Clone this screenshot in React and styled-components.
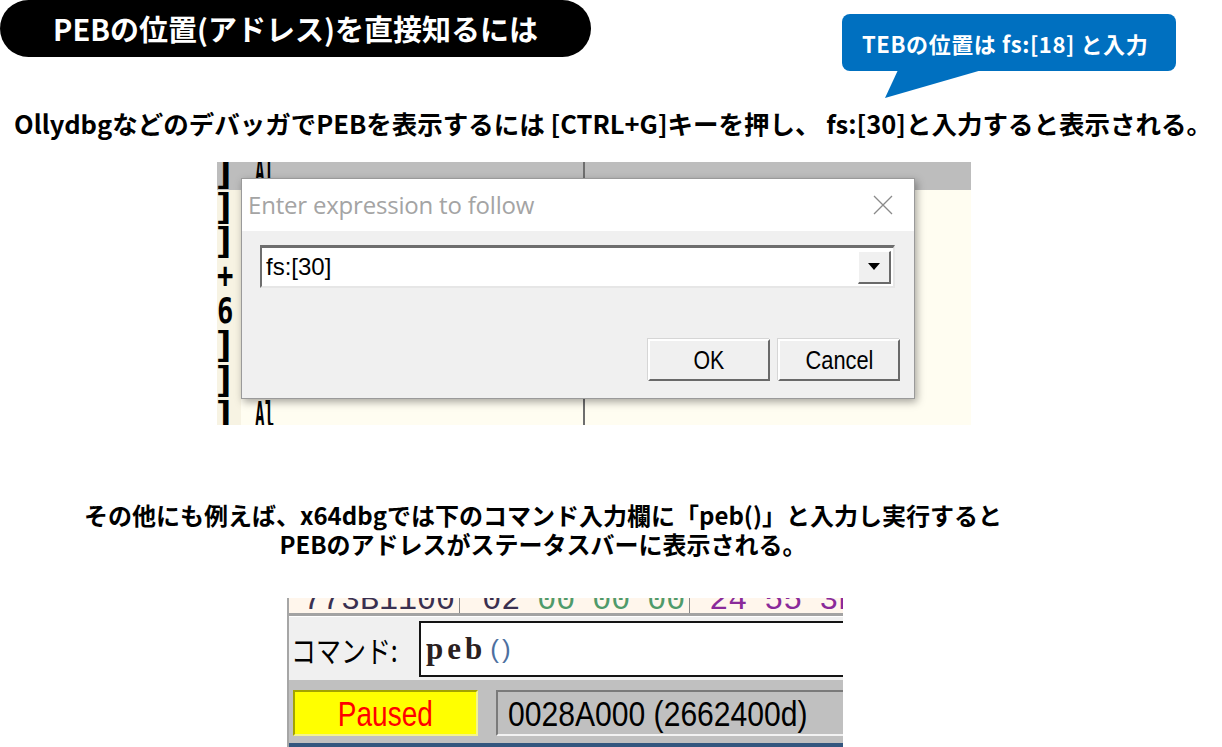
import React from "react";
import styled, { createGlobalStyle } from "styled-components";

const Global = createGlobalStyle`
  html, body { margin: 0; padding: 0; background: #fff; }
  body {
    width: 1222px; height: 747px; overflow: hidden;
    font-family: "Noto Sans CJK JP", "Noto Sans", sans-serif;
  }
`;

const JP = `"Noto Sans CJK JP", "Noto Sans", sans-serif`;
const ARIAL = `"Liberation Sans", Arial, sans-serif`;

const Page = styled.div`
  width: 1222px;
  height: 747px;
  display: flex;
  flex-direction: column;
  background: #fff;
  overflow: hidden;
`;

const Header = styled.header`
  display: flex;
  justify-content: space-between;
  align-items: flex-start;
  height: 100px;
  flex-shrink: 0;
`;

const TitlePill = styled.h1`
  margin: 0;
  width: 591px;
  height: 57px;
  border-radius: 29px;
  background: #000;
  color: #fff;
  display: flex;
  align-items: center;
  justify-content: center;
  font: 700 29px/1 ${JP};
`;

const Bubble = styled.div`
  position: relative;
  margin: 14px 46px 0 0;
  width: 334px;
  height: 57px;
  box-sizing: border-box;
  padding-left: 20px;
  background: #0070c0;
  border-radius: 8px;
  color: #fff;
  display: flex;
  align-items: center;
  font: 700 22px/1 ${JP};
  letter-spacing: 0.6px;
  &::after {
    content: "";
    position: absolute;
    left: 43px;
    top: 56px;
    width: 97px;
    height: 28px;
    background: #0070c0;
    clip-path: polygon(13px 0, 0 100%, 100% 0);
  }
`;

const Lead = styled.p`
  margin: 8px 0 0 14px;
  font: 700 25.5px/30px ${JP};
  color: #000;
  white-space: nowrap;
`;

/* scaled text: bitmap-like condensed fonts of the screenshots */
const Squeezed = styled.span`
  display: inline-block;
  white-space: nowrap;
  transform: scale(${(p) => p.$sx || 1}, ${(p) => p.$sy || 1});
  transform-origin: ${(p) => p.$origin || "center"} center;
`;

/* ---------- OllyDbg screenshot ---------- */

const OllyShot = styled.div`
  position: relative;
  margin: 24px 0 0 217px;
  width: 754px;
  height: 263px;
  overflow: hidden;
  background: #fffdf1;
  flex-shrink: 0;
`;

const OllyRows = styled.div`
  display: flex;
  flex-direction: column;
  margin-top: -7px;
`;

const OllyRow = styled.div`
  display: flex;
  height: 34.7px;
  background: ${(p) => (p.$head ? "#bdbdbd" : "transparent")};
  font: 700 32px/34.7px "DejaVu Sans Mono", monospace;
  color: #000;
`;

const BracketCell = styled.div`
  width: 24px;
  background: ${(p) => (p.$head ? "#bdbdbd" : "#f7f3e3")};
  box-sizing: border-box;
  overflow: hidden;
`;

const BracketGlyph = styled(Squeezed)`
  margin-left: ${(p) => (p.$bracket ? -5 : 0)}px;
`;

const CodeCell = styled.div`
  width: 342px;
  padding-left: 14px;
  box-sizing: border-box;
`;

const SepCell = styled.div`
  width: 2px;
  background: #6e6e6e;
`;

const RestCell = styled.div`
  flex: 1;
`;

const Dialog = styled.div`
  position: absolute;
  left: 24px;
  top: 16px;
  width: 674px;
  height: 221px;
  box-sizing: border-box;
  border: 1px solid #9a9a9a;
  background: #f0f0f0;
  box-shadow: 2px 3px 8px rgba(0, 0, 0, 0.35);
  display: flex;
  flex-direction: column;
`;

const TitleBar = styled.div`
  height: 52px;
  flex-shrink: 0;
  background: #fff;
  display: flex;
  align-items: center;
  justify-content: space-between;
  padding: 0 21px 0 6px;
`;

const TitleText = styled.span`
  font: 400 24px/1 "Open Sans", "Noto Sans", sans-serif;
  letter-spacing: -0.2px;
  color: #a4a4a4;
`;

const DialogBody = styled.div`
  display: flex;
  flex-direction: column;
  padding: 14px 14px 0 18px;
`;

const Combo = styled.div`
  width: 635px;
  height: 43px;
  box-sizing: border-box;
  border-top: 3px solid #6e6e6e;
  border-left: 2px solid #6e6e6e;
  border-bottom: 2px solid #e6e6e6;
  border-right: 2px solid #e6e6e6;
  background: #fff;
  display: flex;
  align-items: center;
  padding: 0 2px 0 4px;
`;

const ComboText = styled.span`
  font: 400 24px/1 ${ARIAL};
  color: #000;
`;

const DropButton = styled.div`
  margin-left: auto;
  width: 33px;
  height: 33px;
  box-sizing: border-box;
  background: #f0f0f0;
  border-top: 1px solid #fff;
  border-left: 1px solid #fff;
  border-right: 2px solid #6a6a6a;
  border-bottom: 2px solid #6a6a6a;
  display: flex;
  align-items: center;
  justify-content: center;
`;

const ButtonRow = styled.div`
  display: flex;
  justify-content: flex-end;
  gap: 8px;
  margin-top: 51px;
`;

const WinButton = styled.div`
  width: 122px;
  height: 42px;
  box-sizing: border-box;
  background: #f0f0f0;
  border-top: 2px solid #fff;
  border-left: 2px solid #fff;
  border-right: 2px solid #696969;
  border-bottom: 2px solid #696969;
  box-shadow: -1px -1px 0 #d6d6d6;
  display: flex;
  align-items: center;
  justify-content: center;
  font: 400 26px/1 ${ARIAL};
  color: #000;
`;

/* ---------- paragraph ---------- */

const Para = styled.p`
  margin: 75px 0 0 0;
  width: 1086px;
  text-align: center;
  font: 700 24px/29px ${JP};
  color: #000;
`;

/* ---------- x64dbg screenshot ---------- */

const X64Shot = styled.div`
  margin: 40px 0 0 287px;
  width: 556px;
  height: 149px;
  box-sizing: border-box;
  border-left: 2px solid #a6a6a6;
  display: flex;
  flex-direction: column;
  overflow: hidden;
  flex-shrink: 0;
`;

const DumpRow = styled.div`
  height: 15px;
  flex-shrink: 0;
  background: #fff6ec;
  overflow: hidden;
  display: flex;
  align-items: flex-end;
  border-bottom: 3px solid #a3a3a3;
  font: 400 31.7px/1 "Liberation Mono", monospace;
`;

const DumpGroup = styled.div`
  display: flex;
  gap: 17px;
  height: 30px;
  align-items: flex-end;
  padding: 0 ${(p) => p.$pr || 0}px 0 ${(p) => p.$pl || 0}px;
  border-right: ${(p) => (p.$sep ? "1px solid #8a8a8a" : "none")};
  margin-bottom: -5px;
`;

const DumpText = styled.span`
  color: ${(p) => p.$c};
`;

const CommandRow = styled.div`
  height: 63px;
  flex-shrink: 0;
  background: #f0f0f0;
  border-top: 1px solid #fff;
  display: flex;
  align-items: center;
`;

const CommandLabel = styled.span`
  width: 130px;
  flex-shrink: 0;
  box-sizing: border-box;
  padding-left: 2px;
  font: 400 26px/1 ${JP};
  color: #000;
`;

const CommandInput = styled.div`
  flex: 1;
  height: 56px;
  box-sizing: border-box;
  margin-right: -10px;
  border: 2px solid #141414;
  background: #fff;
  display: flex;
  align-items: center;
  padding-left: 5px;
`;

const CmdWord = styled.span`
  font: 700 31px/1 "Liberation Serif", serif;
  letter-spacing: 4px;
  color: #2a2020;
`;

const CmdParen = styled.span`
  margin-left: 4px;
  font: 400 26px/1 ${ARIAL};
  color: #4d6fa0;
  letter-spacing: 3px;
`;

const StatusBar = styled.div`
  flex: 1;
  background: #c0c0c0;
  border-bottom: 4px solid #34577f;
  display: flex;
  align-items: flex-start;
  gap: 18px;
  padding: 10px 0 0 4px;
`;

const StatusPanel = styled.div`
  height: 46px;
  box-sizing: border-box;
  display: flex;
  align-items: center;
  overflow: hidden;
  font: 400 35px/1 ${ARIAL};
  ${(p) =>
    p.$state
      ? `
    width: 185px;
    flex-shrink: 0;
    justify-content: center;
    background: #ffff00;
    color: #ff0000;
    border-top: 2px solid #a3a300;
    border-left: 2px solid #a3a300;
    border-right: 2px solid #f4f48a;
    border-bottom: 2px solid #f4f48a;
  `
      : `
    flex: 1;
    margin-right: -10px;
    padding-left: 10px;
    background: #c0c0c0;
    color: #000;
    border-top: 2px solid #7a7a7a;
    border-left: 2px solid #7a7a7a;
    border-bottom: 2px solid #f2f2f2;
  `}
`;

const CloseIcon = () => (
  <svg width="20" height="20" viewBox="0 0 20 20">
    <path d="M1 1 L19 19 M19 1 L1 19" stroke="#8a8a8a" strokeWidth="1.3" fill="none" />
  </svg>
);

const DownTriangle = () => (
  <svg width="12" height="7" viewBox="0 0 12 7">
    <polygon points="0,0 12,0 6,7" fill="#000" />
  </svg>
);

const ollyRows = [
  { b: "]", t: "Al", head: true },
  { b: "]", t: "" },
  { b: "]", t: "" },
  { b: "+", t: "" },
  { b: "6", t: "" },
  { b: "]", t: "" },
  { b: "]", t: "" },
  { b: "]", t: "Al" },
];

export default function App() {
  return (
    <Page>
      <Global />
      <Header>
        <TitlePill>PEBの位置(アドレス)を直接知るには</TitlePill>
        <Bubble>TEBの位置は fs:[18] と入力</Bubble>
      </Header>

      <Lead>
        OllydbgなどのデバッガでPEBを表示するには [CTRL+G]キーを押し、 fs:[30]と入力すると表示される。
      </Lead>

      <OllyShot>
        <OllyRows>
          {ollyRows.map((r, i) => (
            <OllyRow key={i} $head={r.head}>
              <BracketCell $head={r.head}>
                <BracketGlyph
                  $bracket={r.b === "]"}
                  $sx={r.b === "]" ? 1.3 : 0.85}
                  $sy={1.1}
                  $origin="left"
                >
                  {r.b}
                </BracketGlyph>
              </BracketCell>
              <CodeCell>
                <Squeezed $sx={0.5} $sy={1.1} $origin="left">
                  {r.t}
                </Squeezed>
              </CodeCell>
              <SepCell />
              <RestCell />
            </OllyRow>
          ))}
        </OllyRows>
        <Dialog>
          <TitleBar>
            <TitleText>Enter expression to follow</TitleText>
            <CloseIcon />
          </TitleBar>
          <DialogBody>
            <Combo>
              <ComboText>fs:[30]</ComboText>
              <DropButton>
                <DownTriangle />
              </DropButton>
            </Combo>
            <ButtonRow>
              <WinButton>
                <Squeezed $sx={0.82}>OK</Squeezed>
              </WinButton>
              <WinButton>
                <Squeezed $sx={0.84}>Cancel</Squeezed>
              </WinButton>
            </ButtonRow>
          </DialogBody>
        </Dialog>
      </OllyShot>

      <Para>
        その他にも例えば、x64dbgでは下のコマンド入力欄に「peb()」と入力し実行すると
        <br />
        PEBのアドレスがステータスバーに表示される。
      </Para>

      <X64Shot>
        <DumpRow>
          <DumpGroup $pl={14} $pr={4} $sep>
            <DumpText $c="#3a3050">773B1100</DumpText>
          </DumpGroup>
          <DumpGroup $pl={22} $pr={4} $sep>
            <DumpText $c="#3a3050">02</DumpText>
            <DumpText $c="#4f9a6a">00</DumpText>
            <DumpText $c="#4f9a6a">00</DumpText>
            <DumpText $c="#4f9a6a">00</DumpText>
          </DumpGroup>
          <DumpGroup $pl={19}>
            <DumpText $c="#8a2a9a">24</DumpText>
            <DumpText $c="#8a2a9a">55</DumpText>
            <DumpText $c="#8a2a9a">3B</DumpText>
          </DumpGroup>
        </DumpRow>
        <CommandRow>
          <CommandLabel>
            <Squeezed $sx={0.96} $sy={1.15} $origin="left">
              コマンド:
            </Squeezed>
          </CommandLabel>
          <CommandInput>
            <CmdWord>peb</CmdWord>
            <CmdParen>()</CmdParen>
          </CommandInput>
        </CommandRow>
        <StatusBar>
          <StatusPanel $state>
            <Squeezed $sx={0.8}>Paused</Squeezed>
          </StatusPanel>
          <StatusPanel>
            <Squeezed $sx={0.86} $origin="left">0028A000 (2662400d)</Squeezed>
          </StatusPanel>
        </StatusBar>
      </X64Shot>
    </Page>
  );
}
